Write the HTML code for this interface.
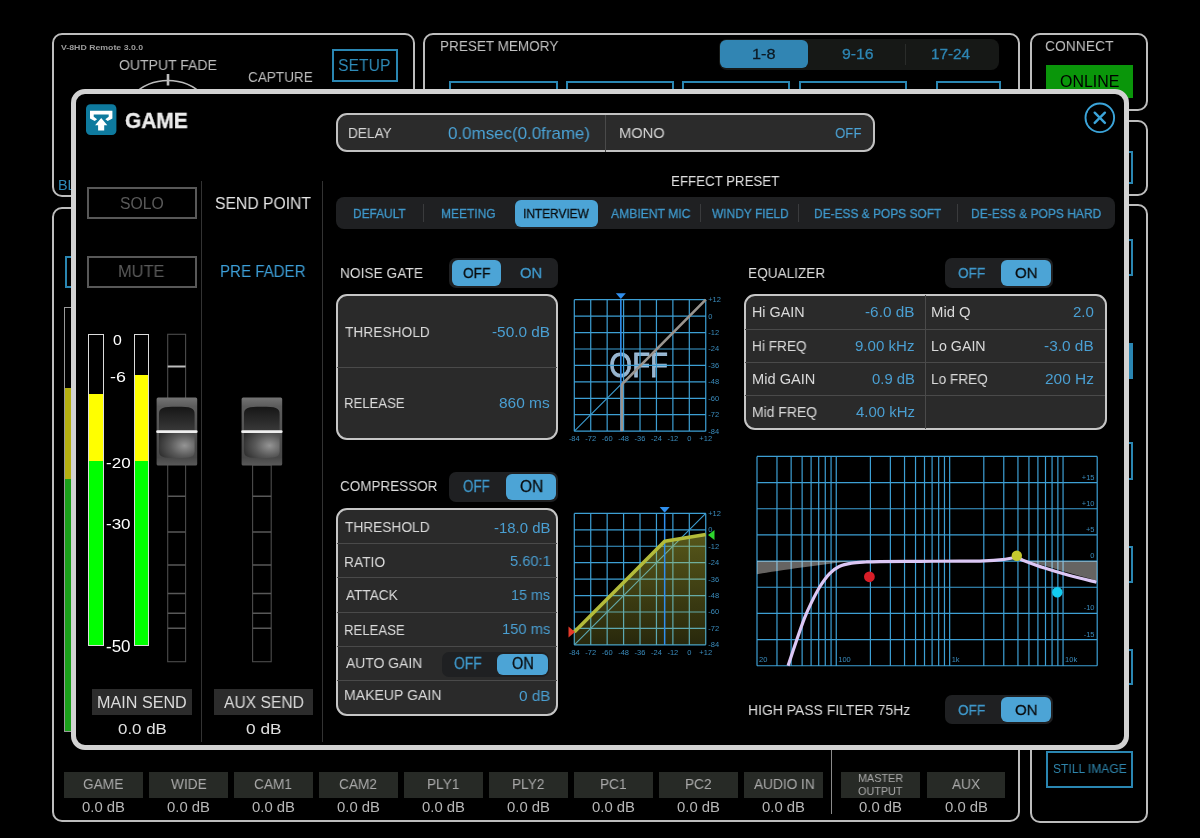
<!DOCTYPE html>
<html><head><meta charset="utf-8">
<style>
*{margin:0;padding:0;box-sizing:border-box}
html,body{width:1200px;height:838px;background:#000;overflow:hidden;position:relative;font-family:"Liberation Sans",sans-serif}
.a{position:absolute}
.t{position:absolute;line-height:1;white-space:nowrap;transform-origin:0 0;will-change:transform}
.pnl{position:absolute;border:2px solid #bdbdbd;border-radius:10px}
.bb{position:absolute;border:2px solid #2a86b2}
.chl{position:absolute;top:772px;width:78px;height:26px;background:#262826;color:#a9a9a9;font-size:15px;text-align:center;line-height:26px}
.chv{position:absolute;top:799px;width:78px;color:#b4b4b4;font-size:15px;text-align:center;line-height:17px}
</style></head><body>
<!-- ===== background panels ===== -->
<div class="pnl" style="left:52px;top:33px;width:363px;height:164px"></div>
<div class="bb" style="left:332px;top:49px;width:66px;height:33px"></div>
<svg class="a" style="left:0;top:0" width="420" height="100"><circle cx="168" cy="130.5" r="50" fill="none" stroke="#bcbcbc" stroke-width="1.6"/><line x1="168" y1="74" x2="168" y2="85.5" stroke="#bcbcbc" stroke-width="2.6"/></svg>

<div class="pnl" style="left:423px;top:33px;width:597px;height:164px"></div>
<div class="a" style="left:719px;top:39px;width:280px;height:31px;background:#161816;border-radius:8px"></div>
<div class="a" style="left:720px;top:40px;width:88px;height:28px;background:#3185b3;border-radius:6px"></div>
<div class="a" style="left:905px;top:44px;width:1px;height:21px;background:#2a2c2a"></div>
<div class="bb" style="left:449px;top:81px;width:109px;height:40px"></div>
<div class="bb" style="left:566px;top:81px;width:108px;height:40px"></div>
<div class="bb" style="left:682px;top:81px;width:108px;height:40px"></div>
<div class="bb" style="left:799px;top:81px;width:108px;height:40px"></div>
<div class="bb" style="left:936px;top:81px;width:65px;height:40px"></div>

<div class="pnl" style="left:1029.5px;top:33px;width:118.5px;height:78px"></div>
<div class="a" style="left:1046px;top:65px;width:87.2px;height:32.6px;background:#0a960a"></div>
<div class="pnl" style="left:1029.5px;top:120px;width:118.5px;height:76px"></div>
<div class="bb" style="left:1080px;top:151px;width:53px;height:33px"></div>
<div class="pnl" style="left:1029.5px;top:204px;width:118.5px;height:619px"></div>
<div class="bb" style="left:1080px;top:239px;width:53px;height:37px"></div>
<div class="a" style="left:1080px;top:343px;width:53px;height:36px;background:#2a86b2"></div>
<div class="bb" style="left:1080px;top:442px;width:53px;height:38px"></div>
<div class="bb" style="left:1080px;top:546px;width:53px;height:37px"></div>
<div class="bb" style="left:1080px;top:649px;width:53px;height:36px"></div>
<div class="bb" style="left:1046px;top:751px;width:87px;height:37px"></div>

<div class="pnl" style="left:52px;top:207px;width:968px;height:615px"></div>
<div class="bb" style="left:65px;top:256px;width:40px;height:32px"></div>
<div class="a" style="left:64px;top:307px;width:7px;height:425px;border:1px solid #9a9a9a;border-right:none;background:#000"></div>
<div class="a" style="left:65px;top:388px;width:6px;height:91px;background:#b5b010"></div>
<div class="a" style="left:65px;top:479px;width:6px;height:252px;background:#1aa01a"></div>
<div class="a" style="left:831px;top:747px;width:1px;height:67px;background:#8a8a8a"></div>
<div class="a" style="left:64.2px;top:771.8px;width:78.6px;height:26px;background:#272a26"></div><div class="a" style="left:149.2px;top:771.8px;width:78.6px;height:26px;background:#272a26"></div><div class="a" style="left:234.2px;top:771.8px;width:78.6px;height:26px;background:#272a26"></div><div class="a" style="left:319.2px;top:771.8px;width:78.6px;height:26px;background:#272a26"></div><div class="a" style="left:404.2px;top:771.8px;width:78.6px;height:26px;background:#272a26"></div><div class="a" style="left:489.2px;top:771.8px;width:78.6px;height:26px;background:#272a26"></div><div class="a" style="left:574.2px;top:771.8px;width:78.6px;height:26px;background:#272a26"></div><div class="a" style="left:659.2px;top:771.8px;width:78.6px;height:26px;background:#272a26"></div><div class="a" style="left:744.2px;top:771.8px;width:78.6px;height:26px;background:#272a26"></div><div class="a" style="left:841.3px;top:771.8px;width:78.7px;height:26px;background:#272a26"></div><div class="a" style="left:926.8px;top:771.8px;width:78.3px;height:26px;background:#272a26"></div>












<div class="t" style="left:60.71px;top:44.02px;font-size:7.97px;color:#9c9c9c;font-weight:bold;transform:scaleX(1.097)">V-8HD Remote 3.0.0</div>
<div class="t" style="left:119.30px;top:57.68px;font-size:14.49px;color:#bcbcbc;transform:scaleX(0.968)">OUTPUT FADE</div>
<div class="t" style="left:248.02px;top:70.13px;font-size:14.78px;color:#bcbcbc;transform:scaleX(0.917)">CAPTURE</div>
<div class="t" style="left:338.41px;top:57.04px;font-size:17.25px;color:#2e8bb8;transform:scaleX(0.912)">SETUP</div>
<div class="t" style="left:57.85px;top:177.75px;font-size:14.06px;color:#2e8bb8;transform:scaleX(1.025)">BL</div>
<div class="t" style="left:440.42px;top:37.69px;font-size:15.07px;color:#c0c0c0;transform:scaleX(0.898)">PRESET MEMORY</div>
<div class="t" style="left:751.60px;top:46.33px;font-size:15.14px;color:#0c1a24;transform:scaleX(1.075);-webkit-text-stroke:0.28px #0c1a24">1-8</div>
<div class="t" style="left:841.71px;top:46.33px;font-size:15.14px;color:#2e86b4;transform:scaleX(1.044);-webkit-text-stroke:0.28px #2e86b4">9-16</div>
<div class="t" style="left:931.48px;top:46.33px;font-size:15.14px;color:#2e86b4;transform:scaleX(1.011);-webkit-text-stroke:0.28px #2e86b4">17-24</div>
<div class="t" style="left:1044.81px;top:37.57px;font-size:15.22px;color:#c0c0c0;transform:scaleX(0.911)">CONNECT</div>
<div class="t" style="left:1060.21px;top:73.95px;font-size:15.94px;color:#000000;transform:scaleX(0.994)">ONLINE</div>
<div class="t" style="left:1052.60px;top:763.45px;font-size:12.17px;color:#2f86ad;transform:scaleX(0.989)">STILL IMAGE</div>
<div class="t" style="left:83.32px;top:777.13px;font-size:14.78px;color:#a9a9a9;transform:scaleX(0.926)">GAME</div>
<div class="t" style="left:82.05px;top:800.13px;font-size:14.78px;color:#b6b6b6;transform:scaleX(1.007)">0.0 dB</div>
<div class="t" style="left:170.85px;top:777.13px;font-size:14.78px;color:#a9a9a9;transform:scaleX(0.926)">WIDE</div>
<div class="t" style="left:167.05px;top:800.13px;font-size:14.78px;color:#b6b6b6;transform:scaleX(1.007)">0.0 dB</div>
<div class="t" style="left:254.48px;top:777.13px;font-size:14.78px;color:#a9a9a9;transform:scaleX(0.926)">CAM1</div>
<div class="t" style="left:252.05px;top:800.13px;font-size:14.78px;color:#b6b6b6;transform:scaleX(1.007)">0.0 dB</div>
<div class="t" style="left:339.48px;top:777.13px;font-size:14.78px;color:#a9a9a9;transform:scaleX(0.926)">CAM2</div>
<div class="t" style="left:337.05px;top:800.13px;font-size:14.78px;color:#b6b6b6;transform:scaleX(1.007)">0.0 dB</div>
<div class="t" style="left:427.08px;top:777.13px;font-size:14.78px;color:#a9a9a9;transform:scaleX(0.926)">PLY1</div>
<div class="t" style="left:422.05px;top:800.13px;font-size:14.78px;color:#b6b6b6;transform:scaleX(1.007)">0.0 dB</div>
<div class="t" style="left:512.08px;top:777.13px;font-size:14.78px;color:#a9a9a9;transform:scaleX(0.926)">PLY2</div>
<div class="t" style="left:507.05px;top:800.13px;font-size:14.78px;color:#b6b6b6;transform:scaleX(1.007)">0.0 dB</div>
<div class="t" style="left:599.95px;top:777.13px;font-size:14.78px;color:#a9a9a9;transform:scaleX(0.926)">PC1</div>
<div class="t" style="left:592.05px;top:800.13px;font-size:14.78px;color:#b6b6b6;transform:scaleX(1.007)">0.0 dB</div>
<div class="t" style="left:684.95px;top:777.13px;font-size:14.78px;color:#a9a9a9;transform:scaleX(0.926)">PC2</div>
<div class="t" style="left:677.05px;top:800.13px;font-size:14.78px;color:#b6b6b6;transform:scaleX(1.007)">0.0 dB</div>
<div class="t" style="left:753.67px;top:777.13px;font-size:14.78px;color:#a9a9a9;transform:scaleX(0.926)">AUDIO IN</div>
<div class="t" style="left:762.05px;top:800.13px;font-size:14.78px;color:#b6b6b6;transform:scaleX(1.007)">0.0 dB</div>
<div class="t" style="left:857.88px;top:773.27px;font-size:11.45px;color:#a9a9a9;transform:scaleX(0.945)">MASTER</div>
<div class="t" style="left:858.21px;top:785.67px;font-size:11.45px;color:#a9a9a9;transform:scaleX(0.945)">OUTPUT</div>
<div class="t" style="left:859.15px;top:800.13px;font-size:14.78px;color:#b6b6b6;transform:scaleX(1.007)">0.0 dB</div>
<div class="t" style="left:952.21px;top:777.13px;font-size:14.78px;color:#a9a9a9;transform:scaleX(0.926)">AUX</div>
<div class="t" style="left:944.65px;top:800.13px;font-size:14.78px;color:#b6b6b6;transform:scaleX(1.007)">0.0 dB</div>
<!-- ===== modal ===== -->
<div class="a" style="left:71px;top:88.5px;width:1058px;height:661px;border:5px solid #d2d2d2;border-radius:14px;background:#000"></div>
<!-- header -->
<svg class="a" style="left:86px;top:104px" width="31" height="32" viewBox="0 0 31 32"><rect x="0" y="0.3" width="30.4" height="30.8" rx="4.5" fill="#0e7a9e"/><path d="M4 6.8 H26.4 V14.5 L21.7 17 L19.3 15.3 L22.7 12.7 V10.5 H7.7 V12.7 L11.1 15.3 L8.7 17 L4 14.5 Z" fill="#fff"/><path d="M15.2 13.9 L21.3 21.2 H18.2 V26.6 H12.1 V21.2 H9.1 Z" fill="#fff"/></svg>
<svg class="a" style="left:1082px;top:100px" width="36" height="36"><circle cx="17.8" cy="17.8" r="14.3" fill="none" stroke="#3ba4d9" stroke-width="1.9"/><path d="M12.7 12.7 L22.9 22.9 M22.9 12.7 L12.7 22.9" stroke="#3ba4d9" stroke-width="2.4" stroke-linecap="round"/></svg>
<!-- delay bar -->
<div class="a" style="left:335.5px;top:113.3px;width:539.5px;height:39.2px;background:#2b2b2b;border:2px solid #c2c2c2;border-radius:11px"></div>
<div class="a" style="left:605px;top:115px;width:1px;height:37px;background:#4a4a4a"></div>
<!-- effect preset -->
<div class="a" style="left:336px;top:197px;width:779px;height:32px;background:#1f2022;border-radius:8px"></div>
<div class="a" style="left:515px;top:200px;width:83px;height:27px;background:#4ca4d6;border-radius:6px"></div>
<div class="a" style="left:423px;top:204px;width:1px;height:18px;background:#3a3b3d"></div>
<div class="a" style="left:700px;top:204px;width:1px;height:18px;background:#3a3b3d"></div>
<div class="a" style="left:798px;top:204px;width:1px;height:18px;background:#3a3b3d"></div>
<div class="a" style="left:957px;top:204px;width:1px;height:18px;background:#3a3b3d"></div>
<!-- left column -->
<div class="a" style="left:201px;top:181px;width:1px;height:561px;background:#333"></div>
<div class="a" style="left:322px;top:181px;width:1px;height:561px;background:#333"></div>
<div class="a" style="left:87px;top:187px;width:110px;height:32px;border:2px solid #585858"></div>
<div class="a" style="left:87px;top:256px;width:110px;height:32px;border:2px solid #585858"></div>
<!-- meters -->
<div class="a" style="left:88px;top:333.7px;width:16px;height:312.5px;border:1.2px solid #dcdcdc;background:#000"></div>
<div class="a" style="left:89.2px;top:394px;width:13.6px;height:67px;background:#ffff00"></div>
<div class="a" style="left:89.2px;top:461px;width:13.6px;height:184px;background:#00ff00"></div>
<div class="a" style="left:133.8px;top:333.7px;width:15.6px;height:312.5px;border:1.2px solid #dcdcdc;background:#000"></div>
<div class="a" style="left:135px;top:375.2px;width:13.2px;height:85.8px;background:#ffff00"></div>
<div class="a" style="left:135px;top:461px;width:13.2px;height:184px;background:#00ff00"></div>
<!-- faders -->
<svg class="a" style="left:150px;top:325px" width="140" height="345">
 <g fill="none" stroke="#4c4c4c" stroke-width="1.1">
  <rect x="17.7" y="9.3" width="17.9" height="327.4"/>
  <rect x="102.6" y="140" width="18.6" height="196.7"/>
 </g>
 <g stroke="#585858" stroke-width="1.5">
  <path d="M17.7 171.2 H35.6 M17.7 206.9 H35.6 M17.7 240 H35.6 M17.7 268.5 H35.6 M17.7 288.3 H35.6 M17.7 303.2 H35.6"/>
  <path d="M102.6 171.2 H121.2 M102.6 206.9 H121.2 M102.6 240 H121.2 M102.6 268.5 H121.2 M102.6 288.3 H121.2 M102.6 303.2 H121.2"/>
 </g>
 <line x1="17.7" y1="41.5" x2="35.6" y2="41.5" stroke="#bdbdbd" stroke-width="2"/>
</svg>
<!-- knobs -->
<svg class="a" style="left:150px;top:390px" width="140" height="80">
 <defs>
  <linearGradient id="kf" x1="0" y1="0" x2="0" y2="1"><stop offset="0" stop-color="#747474"/><stop offset="0.13" stop-color="#5c5c5c"/><stop offset="0.5" stop-color="#525252"/><stop offset="0.88" stop-color="#474747"/><stop offset="1" stop-color="#5a5a5a"/></linearGradient>
  <linearGradient id="kt" x1="0" y1="0" x2="0" y2="1"><stop offset="0" stop-color="#141414"/><stop offset="1" stop-color="#3a3a3a"/></linearGradient>
  <radialGradient id="kb" cx="0.7" cy="0.5" r="0.75"><stop offset="0" stop-color="#959595"/><stop offset="0.5" stop-color="#5a5a5a"/><stop offset="1" stop-color="#2c2c2c"/></radialGradient>
  <clipPath id="kc"><path d="M9 24 C9 17.5 13 16.7 26.8 16.7 C40.6 16.7 44.6 17.5 44.6 24 V61 C44.6 67.3 40.6 68 26.8 68 C13 68 9 67.3 9 61 Z"/></clipPath>
 </defs>
 <g id="knob">
  <rect x="6.6" y="7.6" width="40.6" height="68" rx="1.5" fill="url(#kf)"/>
  <g clip-path="url(#kc)"><rect x="8" y="15" width="38" height="27" fill="url(#kt)"/><rect x="8" y="41.6" width="38" height="28" fill="url(#kb)"/></g>
  <rect x="6.2" y="40.3" width="41.4" height="2.7" rx="1.3" fill="#efefef"/>
 </g>
 <use href="#knob" x="85"/>
</svg>
<div class="a" style="left:92px;top:689px;width:100px;height:26px;background:#2c2c2c"></div>
<div class="a" style="left:214px;top:689px;width:99px;height:26px;background:#2c2c2c"></div>
<!-- noise gate -->
<div class="a" style="left:449px;top:258px;width:109px;height:30px;background:#1f2022;border-radius:7px"></div>
<div class="a" style="left:452px;top:260px;width:49px;height:26px;background:#4ca4d6;border-radius:6px"></div>
<div class="a" style="left:335.5px;top:294.2px;width:222.5px;height:146px;background:#2a2a2a;border:2px solid #c6c6c6;border-radius:11px"></div>
<div class="a" style="left:337px;top:366.5px;width:220px;height:1px;background:#4a4a4a"></div>
<!-- compressor -->
<div class="a" style="left:449px;top:472px;width:109px;height:30px;background:#1f2022;border-radius:7px"></div>
<div class="a" style="left:506px;top:474px;width:50px;height:26px;background:#4ca4d6;border-radius:6px"></div>
<div class="a" style="left:335.5px;top:507.5px;width:222.5px;height:208px;background:#2a2a2a;border:2px solid #c6c6c6;border-radius:11px"></div>
<div class="a" style="left:337px;top:543px;width:220px;height:1px;background:#4a4a4a"></div>
<div class="a" style="left:337px;top:577px;width:220px;height:1px;background:#4a4a4a"></div>
<div class="a" style="left:337px;top:611.5px;width:220px;height:1px;background:#4a4a4a"></div>
<div class="a" style="left:337px;top:646px;width:220px;height:1px;background:#4a4a4a"></div>
<div class="a" style="left:337px;top:680px;width:220px;height:1px;background:#4a4a4a"></div>
<div class="a" style="left:442px;top:652px;width:107px;height:25px;background:#1f2022;border-radius:7px"></div>
<div class="a" style="left:497px;top:654px;width:51px;height:21px;background:#4ca4d6;border-radius:6px"></div>
<!-- equalizer -->
<div class="a" style="left:945px;top:258px;width:108px;height:30px;background:#1f2022;border-radius:7px"></div>
<div class="a" style="left:1001px;top:260px;width:50px;height:26px;background:#4ca4d6;border-radius:6px"></div>
<div class="a" style="left:744px;top:294px;width:362.5px;height:136px;background:#2a2a2a;border:2px solid #c6c6c6;border-radius:11px"></div>
<div class="a" style="left:745px;top:328.7px;width:360px;height:1px;background:#4a4a4a"></div>
<div class="a" style="left:745px;top:362.3px;width:360px;height:1px;background:#4a4a4a"></div>
<div class="a" style="left:745px;top:395.3px;width:360px;height:1px;background:#4a4a4a"></div>
<div class="a" style="left:925px;top:295px;width:1px;height:134px;background:#4a4a4a"></div>
<!-- hpf -->
<div class="a" style="left:945px;top:695px;width:108px;height:29px;background:#1f2022;border-radius:7px"></div>
<div class="a" style="left:1001px;top:697px;width:50px;height:25px;background:#4ca4d6;border-radius:6px"></div>

<!--GRAPHS-->
<svg class="a" style="left:0;top:0;will-change:transform" width="1200" height="838">
<style>.gl{font-size:7.5px;fill:#3a8cbd;font-family:"Liberation Sans",sans-serif}</style>
<text x="609.3" y="377.3" font-size="35" textLength="58.7" lengthAdjust="spacingAndGlyphs" fill="#a6c8e4" fill-opacity="0.9" stroke="#a6c8e4" stroke-opacity="0.9" stroke-width="0.8" style="font-family:'Liberation Sans',sans-serif">OFF</text>
<path d="M574.3 299.7V431.14M574.3 299.7H705.74M590.73 299.7V431.14M574.3 316.13H705.74M607.16 299.7V431.14M574.3 332.56H705.74M623.59 299.7V431.14M574.3 348.99H705.74M640.02 299.7V431.14M574.3 365.42H705.74M656.45 299.7V431.14M574.3 381.85H705.74M672.88 299.7V431.14M574.3 398.28H705.74M689.31 299.7V431.14M574.3 414.71H705.74M705.74 299.7V431.14M574.3 431.14H705.74" stroke="#3d9fd4" stroke-width="1.2" fill="none"/>
<text x="708.24" y="302.2" class="gl">+12</text>
<text x="708.24" y="318.63" class="gl">0</text>
<text x="708.24" y="335.06" class="gl">-12</text>
<text x="708.24" y="351.49" class="gl">-24</text>
<text x="708.24" y="367.92" class="gl">-36</text>
<text x="708.24" y="384.35" class="gl">-48</text>
<text x="708.24" y="400.78" class="gl">-60</text>
<text x="708.24" y="417.21" class="gl">-72</text>
<text x="708.24" y="433.64" class="gl">-84</text>
<text x="574.3" y="441.34" class="gl" text-anchor="middle">-84</text>
<text x="590.73" y="441.34" class="gl" text-anchor="middle">-72</text>
<text x="607.16" y="441.34" class="gl" text-anchor="middle">-60</text>
<text x="623.59" y="441.34" class="gl" text-anchor="middle">-48</text>
<text x="640.02" y="441.34" class="gl" text-anchor="middle">-36</text>
<text x="656.45" y="441.34" class="gl" text-anchor="middle">-24</text>
<text x="672.88" y="441.34" class="gl" text-anchor="middle">-12</text>
<text x="689.31" y="441.34" class="gl" text-anchor="middle">0</text>
<text x="705.74" y="441.34" class="gl" text-anchor="middle">+12</text>
<path d="M574.3 431.14L705.74 299.7" stroke="#3d9fd4" stroke-width="1.1"/>
<path d="M620.85 299.7V431.14" stroke="#2f8fee" stroke-width="1.6"/>
<path d="M615.85 293.2H625.85L620.85 299Z" fill="#2f8fee"/>
<path d="M621.75 431.14V387.59Q621.75 383.09 624.35 381.99L705.74 299.7" stroke="#9a948e" stroke-width="2.6" fill="none"/>
<path d="M574.3 513.4V644.84M574.3 513.4H705.74M590.73 513.4V644.84M574.3 529.83H705.74M607.16 513.4V644.84M574.3 546.26H705.74M623.59 513.4V644.84M574.3 562.69H705.74M640.02 513.4V644.84M574.3 579.12H705.74M656.45 513.4V644.84M574.3 595.55H705.74M672.88 513.4V644.84M574.3 611.98H705.74M689.31 513.4V644.84M574.3 628.41H705.74M705.74 513.4V644.84M574.3 644.84H705.74" stroke="#3d9fd4" stroke-width="1.2" fill="none"/>
<text x="708.24" y="515.9" class="gl">+12</text>
<text x="708.24" y="532.33" class="gl">0</text>
<text x="708.24" y="548.76" class="gl">-12</text>
<text x="708.24" y="565.19" class="gl">-24</text>
<text x="708.24" y="581.62" class="gl">-36</text>
<text x="708.24" y="598.05" class="gl">-48</text>
<text x="708.24" y="614.48" class="gl">-60</text>
<text x="708.24" y="630.91" class="gl">-72</text>
<text x="708.24" y="647.34" class="gl">-84</text>
<text x="574.3" y="655.04" class="gl" text-anchor="middle">-84</text>
<text x="590.73" y="655.04" class="gl" text-anchor="middle">-72</text>
<text x="607.16" y="655.04" class="gl" text-anchor="middle">-60</text>
<text x="623.59" y="655.04" class="gl" text-anchor="middle">-48</text>
<text x="640.02" y="655.04" class="gl" text-anchor="middle">-36</text>
<text x="656.45" y="655.04" class="gl" text-anchor="middle">-24</text>
<text x="672.88" y="655.04" class="gl" text-anchor="middle">-12</text>
<text x="689.31" y="655.04" class="gl" text-anchor="middle">0</text>
<text x="705.74" y="655.04" class="gl" text-anchor="middle">+12</text>
<path d="M574.3 644.84L705.74 513.4" stroke="#3d9fd4" stroke-width="1.1"/>
<defs><linearGradient id="cf" x1="0" y1="0" x2="0" y2="1"><stop offset="0" stop-color="#c8c83c" stop-opacity="0.43"/><stop offset="1" stop-color="#c8c83c" stop-opacity="0.2"/></linearGradient></defs>
<path d="M574.3 631.97L664.66 541.33L705.74 534.49V644.84H574.3Z" fill="url(#cf)"/>
<path d="M664.66 513.4V644.84" stroke="#2f8fee" stroke-width="1.5"/>
<path d="M659.66 507H669.66L664.66 512.8Z" fill="#2f8fee"/>
<path d="M574.3 631.97L664.66 541.33L705.74 534.49" stroke="#b3bb3a" stroke-width="3.6" fill="none" stroke-linejoin="round"/>
<path d="M568.5 626.5L575 632L568.5 637.5Z" fill="#e63a2a"/>
<path d="M714.5 530L708 535L714.5 540Z" fill="#2ed62e"/>
<path d="M757 456.45V665.73M776.97 456.45V665.73M791.14 456.45V665.73M802.13 456.45V665.73M811.11 456.45V665.73M818.7 456.45V665.73M825.27 456.45V665.73M831.07 456.45V665.73M836.26 456.45V665.73M870.4 456.45V665.73M890.37 456.45V665.73M904.54 456.45V665.73M915.53 456.45V665.73M924.51 456.45V665.73M932.1 456.45V665.73M938.67 456.45V665.73M944.47 456.45V665.73M949.66 456.45V665.73M983.8 456.45V665.73M1003.77 456.45V665.73M1017.94 456.45V665.73M1028.93 456.45V665.73M1037.91 456.45V665.73M1045.5 456.45V665.73M1052.07 456.45V665.73M1057.87 456.45V665.73M1063.06 456.45V665.73M1097.2 456.45V665.73M757 456.45H1097.2M757 482.61H1097.2M757 508.77H1097.2M757 534.93H1097.2M757 561.09H1097.2M757 587.25H1097.2M757 613.41H1097.2M757 639.57H1097.2M757 665.73H1097.2" stroke="#3d9fd4" stroke-width="1.2" fill="none"/>
<path d="M757 561.09H853C830 563.5 790 569 757 574.2Z" fill="#f2eee9" fill-opacity="0.42"/>
<path d="M1027 561.09H1097.2V580.7C1075 575 1050 567 1027 561.09Z" fill="#f2eee9" fill-opacity="0.42"/>
<text x="1094.5" y="479.61" class="gl" text-anchor="end">+15</text>
<text x="1094.5" y="505.77" class="gl" text-anchor="end">+10</text>
<text x="1094.5" y="531.93" class="gl" text-anchor="end">+5</text>
<text x="1094.5" y="558.09" class="gl" text-anchor="end">0</text>
<text x="1094.5" y="610.41" class="gl" text-anchor="end">-10</text>
<text x="1094.5" y="636.57" class="gl" text-anchor="end">-15</text>
<text x="759" y="662" class="gl">20</text>
<text x="838.26" y="662" class="gl">100</text>
<text x="951.66" y="662" class="gl">1k</text>
<text x="1065.06" y="662" class="gl">10k</text>
<path d="M788.1 665.7C789.45 661.67 793.5 649.35 796.2 641.5C798.9 633.65 801.75 625.12 804.3 618.6C806.85 612.08 808.88 607.75 811.5 602.4C814.12 597.05 816.98 591.3 820 586.5C823.02 581.7 826.4 576.93 829.6 573.6C832.8 570.27 835.53 568.25 839.2 566.5C842.87 564.75 847.13 563.85 851.6 563.1C856.07 562.35 861.27 562.25 866 562C870.73 561.75 871 561.72 880 561.6C889 561.48 906.67 561.37 920 561.3C933.33 561.23 949.3 561.28 960 561.2C970.7 561.12 977.15 561.07 984.2 560.8C991.25 560.53 996.87 560.15 1002.3 559.6C1007.73 559.05 1013.38 557.4 1016.8 557.5C1020.22 557.6 1018.17 558.43 1022.8 560.2C1027.43 561.97 1036.95 565.58 1044.6 568.1C1052.25 570.62 1060.05 572.95 1068.7 575.3C1077.35 577.65 1091.87 581.05 1096.5 582.2" stroke="#dcc7f5" stroke-width="3.2" fill="none" stroke-linejoin="round"/>
<circle cx="869.4" cy="576.8" r="5.4" fill="#d81e28"/>
<circle cx="1016.8" cy="555.7" r="5.2" fill="#c5c82e"/>
<circle cx="1057.3" cy="592.2" r="5.2" fill="#12cdf2"/>
</svg>
<!--/GRAPHS-->
<div class="t" style="left:125.16px;top:110.02px;font-size:21.74px;color:#ebebeb;font-weight:bold;transform:scaleX(0.961);-webkit-text-stroke:0.35px #ebebeb">GAME</div>
<div class="t" style="left:347.61px;top:125.96px;font-size:14.64px;color:#d6d6d6;transform:scaleX(0.934)">DELAY</div>
<div class="t" style="left:447.62px;top:124.52px;font-size:17.39px;color:#4ba3d6;transform:scaleX(0.974)">0.0msec(0.0frame)</div>
<div class="t" style="left:618.63px;top:125.37px;font-size:15.22px;color:#d6d6d6;transform:scaleX(0.964)">MONO</div>
<div class="t" style="left:834.94px;top:125.37px;font-size:15.22px;color:#4ba3d6;transform:scaleX(0.870)">OFF</div>
<div class="t" style="left:671.24px;top:173.91px;font-size:14.93px;color:#e0e0e0;transform:scaleX(0.890)">EFFECT PRESET</div>
<div class="t" style="left:352.85px;top:206.67px;font-size:13.33px;color:#3f99cc;transform:scaleX(0.892);-webkit-text-stroke:0.28px #3f99cc">DEFAULT</div>
<div class="t" style="left:440.74px;top:206.67px;font-size:13.33px;color:#3f99cc;transform:scaleX(0.900);-webkit-text-stroke:0.28px #3f99cc">MEETING</div>
<div class="t" style="left:522.73px;top:206.67px;font-size:13.33px;color:#0a0c0e;transform:scaleX(0.892);-webkit-text-stroke:0.28px #0a0c0e">INTERVIEW</div>
<div class="t" style="left:611.00px;top:206.67px;font-size:13.33px;color:#3f99cc;transform:scaleX(0.912);-webkit-text-stroke:0.28px #3f99cc">AMBIENT MIC</div>
<div class="t" style="left:711.68px;top:206.67px;font-size:13.33px;color:#3f99cc;transform:scaleX(0.896);-webkit-text-stroke:0.28px #3f99cc">WINDY FIELD</div>
<div class="t" style="left:813.75px;top:206.67px;font-size:13.33px;color:#3f99cc;transform:scaleX(0.895);-webkit-text-stroke:0.28px #3f99cc">DE-ESS &amp; POPS SOFT</div>
<div class="t" style="left:971.04px;top:206.67px;font-size:13.33px;color:#3f99cc;transform:scaleX(0.902);-webkit-text-stroke:0.28px #3f99cc">DE-ESS &amp; POPS HARD</div>
<div class="t" style="left:120.11px;top:195.70px;font-size:15.65px;color:#5a5a5a;transform:scaleX(1.008)">SOLO</div>
<div class="t" style="left:118.49px;top:263.73px;font-size:16.67px;color:#5a5a5a;transform:scaleX(0.985)">MUTE</div>
<div class="t" style="left:214.81px;top:195.08px;font-size:16.38px;color:#e6e6e6;transform:scaleX(0.959)">SEND POINT</div>
<div class="t" style="left:219.79px;top:263.73px;font-size:16.67px;color:#3d9fd8;transform:scaleX(0.906)">PRE FADER</div>
<div class="t" style="left:113.07px;top:333.03px;font-size:14.78px;color:#ffffff;transform:scaleX(1.071)">0</div>
<div class="t" style="left:109.69px;top:369.53px;font-size:14.78px;color:#ffffff;transform:scaleX(1.209)">-6</div>
<div class="t" style="left:105.62px;top:455.07px;font-size:15.22px;color:#ffffff;transform:scaleX(1.118)">-20</div>
<div class="t" style="left:105.62px;top:516.56px;font-size:14.64px;color:#ffffff;transform:scaleX(1.162)">-30</div>
<div class="t" style="left:105.62px;top:638.50px;font-size:15.65px;color:#ffffff;transform:scaleX(1.087)">-50</div>
<div class="t" style="left:96.81px;top:693.93px;font-size:16.09px;color:#dadada;transform:scaleX(1.005)">MAIN SEND</div>
<div class="t" style="left:223.70px;top:693.93px;font-size:16.09px;color:#dadada;transform:scaleX(0.973)">AUX SEND</div>
<div class="t" style="left:117.73px;top:721.47px;font-size:15.22px;color:#e0e0e0;transform:scaleX(1.108)">0.0 dB</div>
<div class="t" style="left:245.91px;top:721.47px;font-size:15.22px;color:#e0e0e0;transform:scaleX(1.133)">0 dB</div>
<div class="t" style="left:339.60px;top:265.51px;font-size:14.93px;color:#dcdcdc;transform:scaleX(0.920)">NOISE GATE</div>
<div class="t" style="left:462.51px;top:265.51px;font-size:14.93px;color:#0a0c0e;transform:scaleX(0.919);-webkit-text-stroke:0.28px #0a0c0e">OFF</div>
<div class="t" style="left:520.16px;top:265.51px;font-size:14.93px;color:#3f99cc;transform:scaleX(0.993);-webkit-text-stroke:0.28px #3f99cc">ON</div>
<div class="t" style="left:345.12px;top:324.47px;font-size:15.22px;color:#dadada;transform:scaleX(0.904)">THRESHOLD</div>
<div class="t" style="left:491.69px;top:324.47px;font-size:15.22px;color:#4a9fd2;transform:scaleX(1.010)">-50.0 dB</div>
<div class="t" style="left:344.35px;top:395.49px;font-size:15.07px;color:#dadada;transform:scaleX(0.872)">RELEASE</div>
<div class="t" style="left:498.88px;top:395.49px;font-size:15.07px;color:#4a9fd2;transform:scaleX(1.026)">860 ms</div>
<div class="t" style="left:340.23px;top:479.33px;font-size:14.78px;color:#dcdcdc;transform:scaleX(0.913)">COMPRESSOR</div>
<div class="t" style="left:462.63px;top:478.60px;font-size:15.65px;color:#3f99cc;transform:scaleX(0.853);-webkit-text-stroke:0.28px #3f99cc">OFF</div>
<div class="t" style="left:519.93px;top:478.60px;font-size:15.65px;color:#0a0c0e;transform:scaleX(0.984);-webkit-text-stroke:0.28px #0a0c0e">ON</div>
<div class="t" style="left:345.23px;top:520.26px;font-size:14.64px;color:#dadada;transform:scaleX(0.937)">THRESHOLD</div>
<div class="t" style="left:494.21px;top:520.71px;font-size:14.93px;color:#4a9fd2;transform:scaleX(0.993)">-18.0 dB</div>
<div class="t" style="left:344.39px;top:553.77px;font-size:15.22px;color:#dadada;transform:scaleX(0.908)">RATIO</div>
<div class="t" style="left:509.51px;top:554.11px;font-size:14.93px;color:#4a9fd2;transform:scaleX(0.981)">5.60:1</div>
<div class="t" style="left:345.50px;top:587.53px;font-size:14.78px;color:#dadada;transform:scaleX(0.923)">ATTACK</div>
<div class="t" style="left:510.85px;top:587.63px;font-size:14.78px;color:#4a9fd2;transform:scaleX(0.972)">15 ms</div>
<div class="t" style="left:344.45px;top:621.67px;font-size:15.22px;color:#dadada;transform:scaleX(0.864)">RELEASE</div>
<div class="t" style="left:501.72px;top:621.71px;font-size:14.93px;color:#4a9fd2;transform:scaleX(0.988)">150 ms</div>
<div class="t" style="left:345.50px;top:656.43px;font-size:14.78px;color:#dadada;transform:scaleX(0.942)">AUTO GAIN</div>
<div class="t" style="left:453.51px;top:655.85px;font-size:15.94px;color:#3f99cc;transform:scaleX(0.864);-webkit-text-stroke:0.28px #3f99cc">OFF</div>
<div class="t" style="left:511.78px;top:655.85px;font-size:15.94px;color:#0a0c0e;transform:scaleX(0.907);-webkit-text-stroke:0.28px #0a0c0e">ON</div>
<div class="t" style="left:344.37px;top:688.33px;font-size:14.78px;color:#dadada;transform:scaleX(0.952)">MAKEUP GAIN</div>
<div class="t" style="left:518.99px;top:687.72px;font-size:15.51px;color:#4a9fd2;transform:scaleX(0.984)">0 dB</div>
<div class="t" style="left:748.21px;top:265.47px;font-size:15.22px;color:#dcdcdc;transform:scaleX(0.896)">EQUALIZER</div>
<div class="t" style="left:957.62px;top:265.47px;font-size:15.22px;color:#3f99cc;transform:scaleX(0.891);-webkit-text-stroke:0.28px #3f99cc">OFF</div>
<div class="t" style="left:1015.25px;top:265.47px;font-size:15.22px;color:#0a0c0e;transform:scaleX(0.988);-webkit-text-stroke:0.28px #0a0c0e">ON</div>
<div class="t" style="left:752.25px;top:304.85px;font-size:14.06px;color:#dadada;transform:scaleX(1.021)">Hi GAIN</div>
<div class="t" style="left:865.29px;top:304.85px;font-size:14.06px;color:#4a9fd2;transform:scaleX(1.091)">-6.0 dB</div>
<div class="t" style="left:752.31px;top:338.65px;font-size:14.06px;color:#dadada;transform:scaleX(0.971)">Hi FREQ</div>
<div class="t" style="left:855.15px;top:338.65px;font-size:14.06px;color:#4a9fd2;transform:scaleX(1.072)">9.00 kHz</div>
<div class="t" style="left:752.23px;top:371.96px;font-size:14.64px;color:#dadada">Mid GAIN</div>
<div class="t" style="left:871.71px;top:371.96px;font-size:14.64px;color:#4a9fd2;transform:scaleX(1.015)">0.9 dB</div>
<div class="t" style="left:752.28px;top:405.48px;font-size:14.49px;color:#dadada;transform:scaleX(0.962)">Mid FREQ</div>
<div class="t" style="left:855.60px;top:405.48px;font-size:14.49px;color:#4a9fd2;transform:scaleX(1.031)">4.00 kHz</div>
<div class="t" style="left:931.11px;top:304.85px;font-size:14.06px;color:#dadada;transform:scaleX(1.059)">Mid Q</div>
<div class="t" style="left:1072.55px;top:304.85px;font-size:14.06px;color:#4a9fd2;transform:scaleX(1.072)">2.0</div>
<div class="t" style="left:931.16px;top:338.65px;font-size:14.06px;color:#dadada;transform:scaleX(1.014)">Lo GAIN</div>
<div class="t" style="left:1043.98px;top:338.65px;font-size:14.06px;color:#4a9fd2;transform:scaleX(1.098)">-3.0 dB</div>
<div class="t" style="left:931.21px;top:371.96px;font-size:14.64px;color:#dadada;transform:scaleX(0.933)">Lo FREQ</div>
<div class="t" style="left:1044.73px;top:371.96px;font-size:14.64px;color:#4a9fd2;transform:scaleX(1.055)">200 Hz</div>
<div class="t" style="left:748.18px;top:701.57px;font-size:15.22px;color:#dcdcdc;transform:scaleX(0.916)">HIGH PASS FILTER 75Hz</div>
<div class="t" style="left:957.62px;top:701.57px;font-size:15.22px;color:#3f99cc;transform:scaleX(0.891);-webkit-text-stroke:0.28px #3f99cc">OFF</div>
<div class="t" style="left:1015.25px;top:701.57px;font-size:15.22px;color:#0a0c0e;transform:scaleX(0.988);-webkit-text-stroke:0.28px #0a0c0e">ON</div>
<!--MODAL-->
</body></html>
